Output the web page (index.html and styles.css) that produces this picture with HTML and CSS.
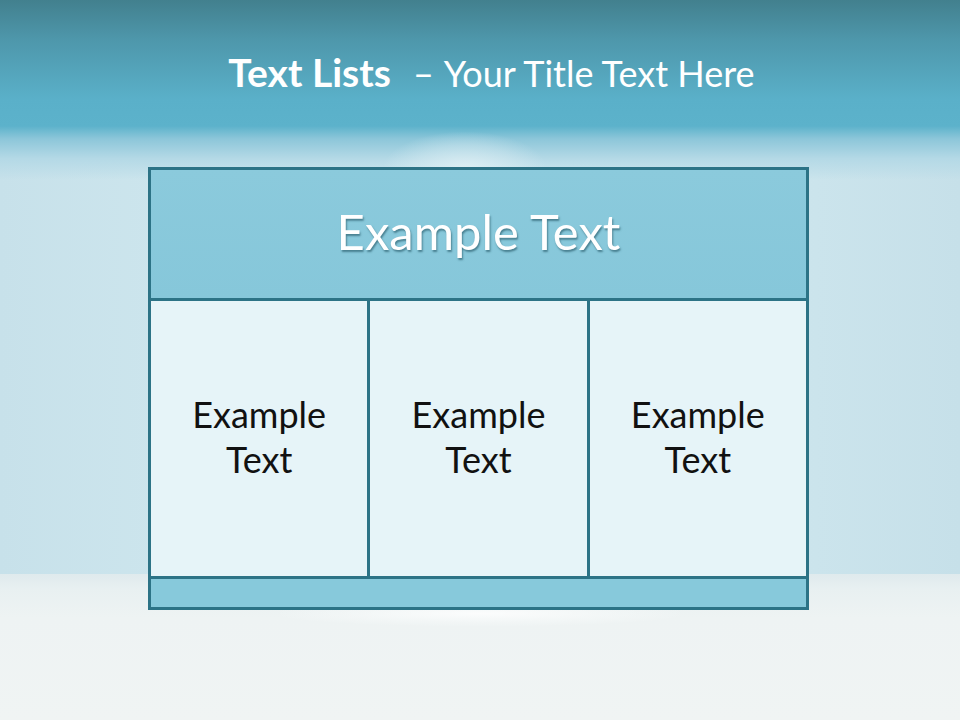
FILE: index.html
```html
<!DOCTYPE html>
<html>
<head>
<meta charset="utf-8">
<link rel="stylesheet" href="styles.css">
</head>
<body>
<div class="slide">
  <div class="sky"></div>
  <div class="floor"></div>
  <div class="cloud"></div>
  <div class="reflect"></div>
  <h1 class="title"><span class="bold">Text Lists</span><span class="dash">–</span><span class="light">Your Title Text Here</span></h1>
  <div class="table">
    <div class="head">Example Text</div>
    <div class="cell">Example<br>Text</div>
    <div class="cell">Example<br>Text</div>
    <div class="cell">Example<br>Text</div>
    <div class="foot"></div>
  </div>
</div>
</body>
</html>
```

FILE: styles.css
```css
html, body {
  margin: 0;
  padding: 0;
}
body {
  width: 960px;
  height: 720px;
  overflow: hidden;
  font-family: Lato, "Open Sans", sans-serif;
}
.slide {
  position: relative;
  width: 960px;
  height: 720px;
  background: linear-gradient(to right, #c7e1ea 0%, #d0e8ef 30%, #d8edf3 50%, #d0e8ef 70%, #c6e0e9 100%);
  display: flex;
  flex-direction: column;
  align-items: center;
}
.sky {
  position: absolute;
  left: 0; top: 0;
  width: 960px;
  height: 180px;
  background: linear-gradient(to bottom, #42808e 0%, #4e97ab 22%, #5ab0c9 55%, #5cb2cb 70%, #8cc6d9 77%, #b4d9e6 88%, rgba(200,226,235,0) 100%);
}
.floor {
  position: absolute;
  left: 0; top: 574px;
  width: 960px;
  height: 146px;
  background: linear-gradient(to bottom, #dfeaed 0%, #e8f0f1 10%, #eef3f3 30%, #f0f4f3 100%);
}
.cloud {
  position: absolute;
  left: 385px; top: 132px;
  width: 160px;
  height: 40px;
  background: radial-gradient(ellipse at 50% 90%, rgba(232,244,247,0.7) 0%, rgba(225,240,245,0.35) 45%, rgba(220,238,244,0) 72%);
}
.reflect {
  position: absolute;
  left: 280px; top: 608px;
  width: 400px;
  height: 18px;
  background: radial-gradient(ellipse at 50% 30%, rgba(255,255,255,0.8) 0%, rgba(250,252,252,0.4) 45%, rgba(240,245,245,0) 75%);
}
.title {
  position: relative;
  margin: 48px 0 0 0;
  height: 48px;
  display: flex;
  align-items: baseline;
  color: #ffffff;
  font-size: 36px;
  font-weight: normal;
  line-height: 48px;
  white-space: nowrap;
  padding-left: 23px;
}
.title .bold {
  font-weight: bold;
  font-size: 39px;
  margin-right: 22px;
}
.title .dash {
  margin-right: 10px;
}
.table {
  position: relative;
  margin: 71px 0 0 -3px;
  width: 661px;
  box-sizing: border-box;
  padding: 3px;
  background: #2c7386;
  display: grid;
  grid-template-columns: 1fr 1fr 1fr;
  grid-template-rows: 128px 275px 28px;
  gap: 3px;
}
.head {
  grid-column: 1 / 4;
  background: linear-gradient(to bottom, #8bcadc, #86c7da);
  color: #ffffff;
  font-size: 49px;
  display: flex;
  align-items: center;
  justify-content: center;
  text-shadow: 1px 2px 2px rgba(30, 80, 95, 0.6);
  padding-bottom: 6px;
}
.cell {
  background: #e6f4f8;
  color: #111111;
  font-size: 36px;
  line-height: 45px;
  display: flex;
  align-items: center;
  justify-content: center;
  text-align: center;
  padding-bottom: 4px;
}
.foot {
  grid-column: 1 / 4;
  background: #87c9db;
}
```
